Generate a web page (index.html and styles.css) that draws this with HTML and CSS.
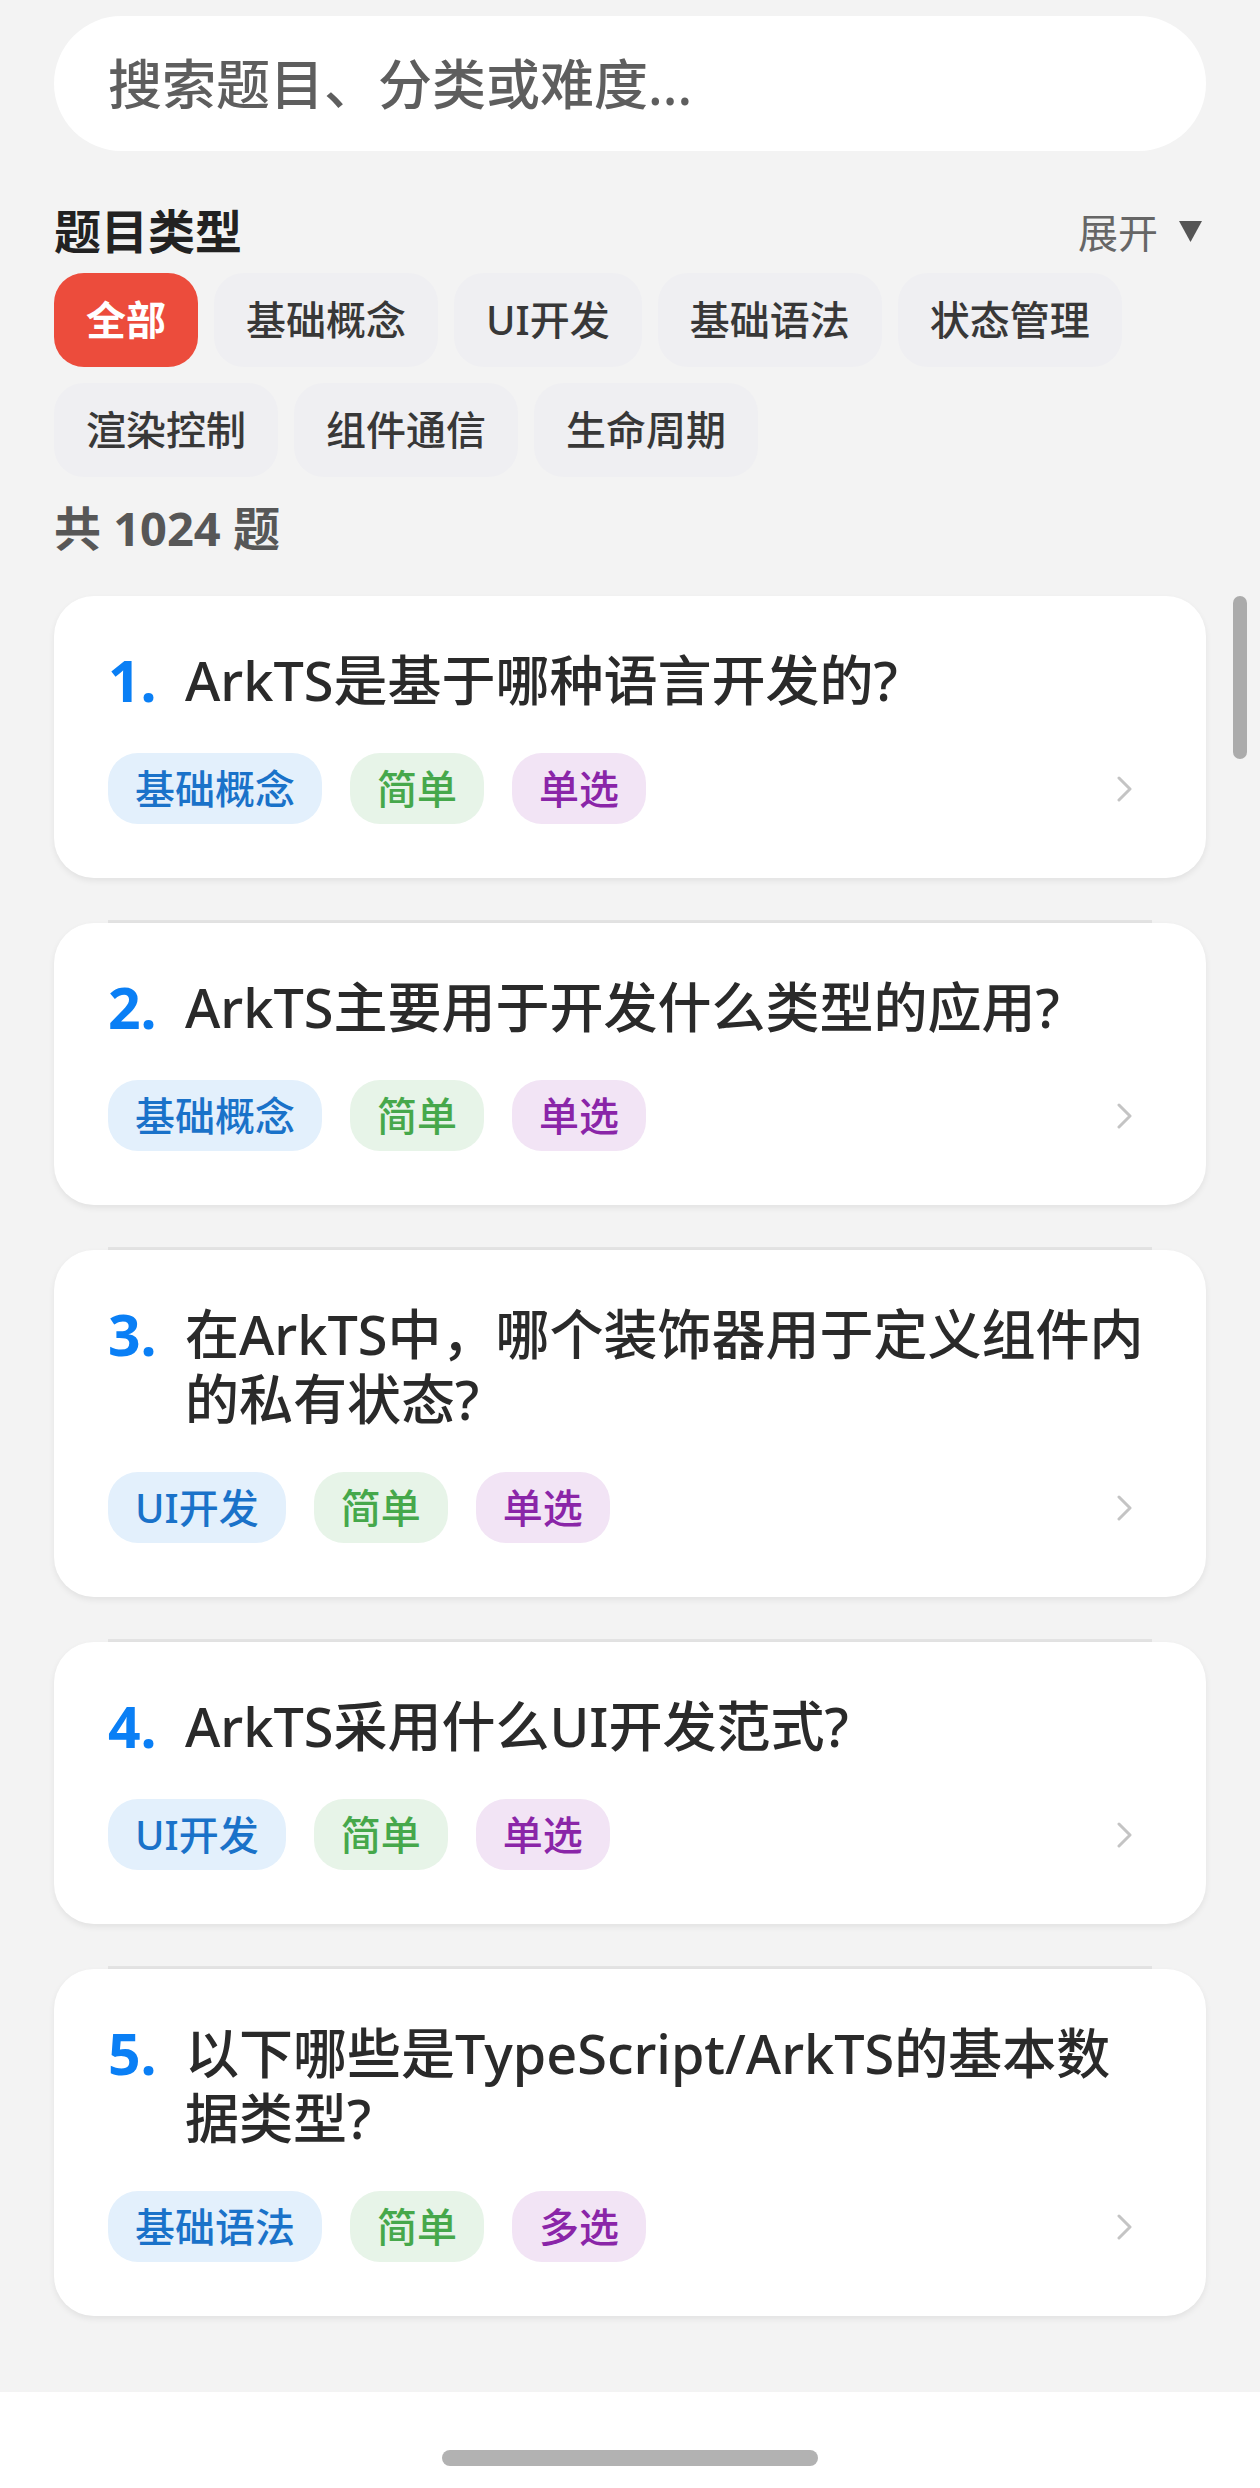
FILE: index.html
```html
<!DOCTYPE html>
<html lang="zh-CN">
<head>
<meta charset="utf-8">
<title>题目列表</title>
<link rel="stylesheet" href="styles.css">
</head>
<body>
<div class="screen">
  <main class="page">
    <div class="search">
      <span class="search-placeholder">搜索题目、分类或难度...</span>
    </div>

    <div class="section-head">
      <h2 class="section-title">题目类型</h2>
      <div class="expand">
        <span>展开</span>
        <svg class="expand-icon" width="23" height="21" viewBox="0 0 23 21"><polygon points="0,0 23,0 11.5,21" fill="#555"/></svg>
      </div>
    </div>

    <div class="chips">
      <span class="chip chip-active">全部</span>
      <span class="chip">基础概念</span>
      <span class="chip">UI开发</span>
      <span class="chip">基础语法</span>
      <span class="chip">状态管理</span>
      <span class="chip">渲染控制</span>
      <span class="chip">组件通信</span>
      <span class="chip">生命周期</span>
    </div>

    <div class="count">共 1024 题</div>

    <div class="list">
      <div class="item">
        <div class="card">
          <div class="question"><span class="num">1.</span><span class="qtext">ArkTS是基于哪种语言开发的?</span></div>
          <div class="tag-row">
            <div class="tags"><span class="tag tag-blue">基础概念</span><span class="tag tag-green">简单</span><span class="tag tag-purple">单选</span></div>
            <svg class="chevron" width="16" height="26" viewBox="0 0 16 26"><polyline points="2,2 13,13 2,24" fill="none" stroke="#c4c4c4" stroke-width="3" stroke-linecap="round" stroke-linejoin="round"/></svg>
          </div>
        </div>
      </div>
      <div class="item">
        <div class="divider"></div>
        <div class="card">
          <div class="question"><span class="num">2.</span><span class="qtext">ArkTS主要用于开发什么类型的应用?</span></div>
          <div class="tag-row">
            <div class="tags"><span class="tag tag-blue">基础概念</span><span class="tag tag-green">简单</span><span class="tag tag-purple">单选</span></div>
            <svg class="chevron" width="16" height="26" viewBox="0 0 16 26"><polyline points="2,2 13,13 2,24" fill="none" stroke="#c4c4c4" stroke-width="3" stroke-linecap="round" stroke-linejoin="round"/></svg>
          </div>
        </div>
      </div>
      <div class="item">
        <div class="divider"></div>
        <div class="card">
          <div class="question"><span class="num">3.</span><span class="qtext">在ArkTS中，哪个装饰器用于定义组件内的私有状态?</span></div>
          <div class="tag-row">
            <div class="tags"><span class="tag tag-blue">UI开发</span><span class="tag tag-green">简单</span><span class="tag tag-purple">单选</span></div>
            <svg class="chevron" width="16" height="26" viewBox="0 0 16 26"><polyline points="2,2 13,13 2,24" fill="none" stroke="#c4c4c4" stroke-width="3" stroke-linecap="round" stroke-linejoin="round"/></svg>
          </div>
        </div>
      </div>
      <div class="item">
        <div class="divider"></div>
        <div class="card">
          <div class="question"><span class="num">4.</span><span class="qtext">ArkTS采用什么UI开发范式?</span></div>
          <div class="tag-row">
            <div class="tags"><span class="tag tag-blue">UI开发</span><span class="tag tag-green">简单</span><span class="tag tag-purple">单选</span></div>
            <svg class="chevron" width="16" height="26" viewBox="0 0 16 26"><polyline points="2,2 13,13 2,24" fill="none" stroke="#c4c4c4" stroke-width="3" stroke-linecap="round" stroke-linejoin="round"/></svg>
          </div>
        </div>
      </div>
      <div class="item">
        <div class="divider"></div>
        <div class="card">
          <div class="question"><span class="num">5.</span><span class="qtext">以下哪些是TypeScript/ArkTS的基本数据类型?</span></div>
          <div class="tag-row">
            <div class="tags"><span class="tag tag-blue">基础语法</span><span class="tag tag-green">简单</span><span class="tag tag-purple">多选</span></div>
            <svg class="chevron" width="16" height="26" viewBox="0 0 16 26"><polyline points="2,2 13,13 2,24" fill="none" stroke="#c4c4c4" stroke-width="3" stroke-linecap="round" stroke-linejoin="round"/></svg>
          </div>
        </div>
      </div>
    </div>

    <div class="scrollbar"></div>
  </main>

  <footer class="navbar">
    <div class="home-bar"></div>
  </footer>
</div>
</body>
</html>
```

FILE: styles.css
```css
* {
  box-sizing: border-box;
}

html, body {
  margin: 0;
  padding: 0;
}

body {
  width: 1260px;
  background: #ffffff;
  font-family: "Noto Sans", "Noto Sans CJK SC", sans-serif;
  color: #222;
}

.screen {
  display: flex;
  flex-direction: column;
}

.page {
  position: relative;
  background: #f3f3f3;
  padding: 16px 54px 76px;
}

/* search */
.search {
  height: 135px;
  border-radius: 68px;
  background: #ffffff;
  display: flex;
  align-items: center;
  padding-left: 54px;
  margin-bottom: 47px;
}

.search-placeholder {
  font-size: 54px;
  font-weight: 500;
  color: #5e5e5e;
  line-height: 1;
}

/* section head */
.section-head {
  height: 66px;
  display: flex;
  align-items: center;
  justify-content: space-between;
  margin-bottom: 9px;
}

.section-title {
  margin: 0;
  font-size: 47px;
  font-weight: 700;
  color: #222;
  line-height: 66px;
}

.expand {
  display: flex;
  align-items: center;
  gap: 21px;
  font-size: 40px;
  color: #666;
  padding-right: 4px;
}

.expand-icon {
  display: block;
}

/* chips */
.chips {
  display: flex;
  flex-wrap: wrap;
  gap: 16px;
  margin-bottom: 18px;
}

.chip {
  height: 94px;
  line-height: 94px;
  padding: 0 32px;
  border-radius: 30px;
  background: #efeff2;
  font-size: 40px;
  font-weight: 500;
  color: #383838;
}

.chip-active {
  background: #ec4c3c;
  color: #ffffff;
  font-weight: 700;
}

/* count */
.count {
  font-size: 47px;
  font-weight: 700;
  color: #575757;
  line-height: 66px;
  margin-bottom: 35px;
}

/* list */
.list {
  display: flex;
  flex-direction: column;
  gap: 42px;
}

.divider {
  height: 3px;
  margin: 0 54px;
  background: #e3e3e3;
}

.card {
  background: #ffffff;
  border-radius: 40px;
  padding: 52px 56px 54px 54px;
  box-shadow: 0 3px 6px rgba(0, 0, 0, 0.07);
}

.question {
  display: flex;
  align-items: flex-start;
  font-size: 54px;
  line-height: 65px;
  margin-bottom: 40px;
}

.num {
  flex: 0 0 77px;
  height: 65px;
  font-size: 57px;
  line-height: 65px;
  font-weight: 700;
  color: #0a7ff5;
}

.qtext {
  flex: 1;
  font-weight: 500;
  color: #2a2a2a;
}

.tag-row {
  display: flex;
  align-items: center;
  justify-content: space-between;
}

.tags {
  display: flex;
  gap: 28px;
}

.tag {
  height: 71px;
  line-height: 71px;
  padding: 0 27px;
  border-radius: 30px;
  font-size: 40px;
  font-weight: 500;
}

.tag-blue {
  background: #e3f0fc;
  color: #1a72c9;
}

.tag-green {
  background: #e7f4e8;
  color: #46a84b;
}

.tag-purple {
  background: #f2e4f5;
  color: #8a25a8;
}

.chevron {
  display: block;
  margin-right: 17px;
}

/* overlay scrollbar */
.scrollbar {
  position: absolute;
  left: 1233px;
  top: 596px;
  width: 14px;
  height: 163px;
  border-radius: 7px;
  background: #ababab;
}

/* navigation bar */
.navbar {
  height: 96px;
  background: #ffffff;
  display: flex;
  justify-content: center;
  padding-top: 58px;
}

.home-bar {
  width: 376px;
  height: 16px;
  border-radius: 8px;
  background: #b2b2b2;
}
```
